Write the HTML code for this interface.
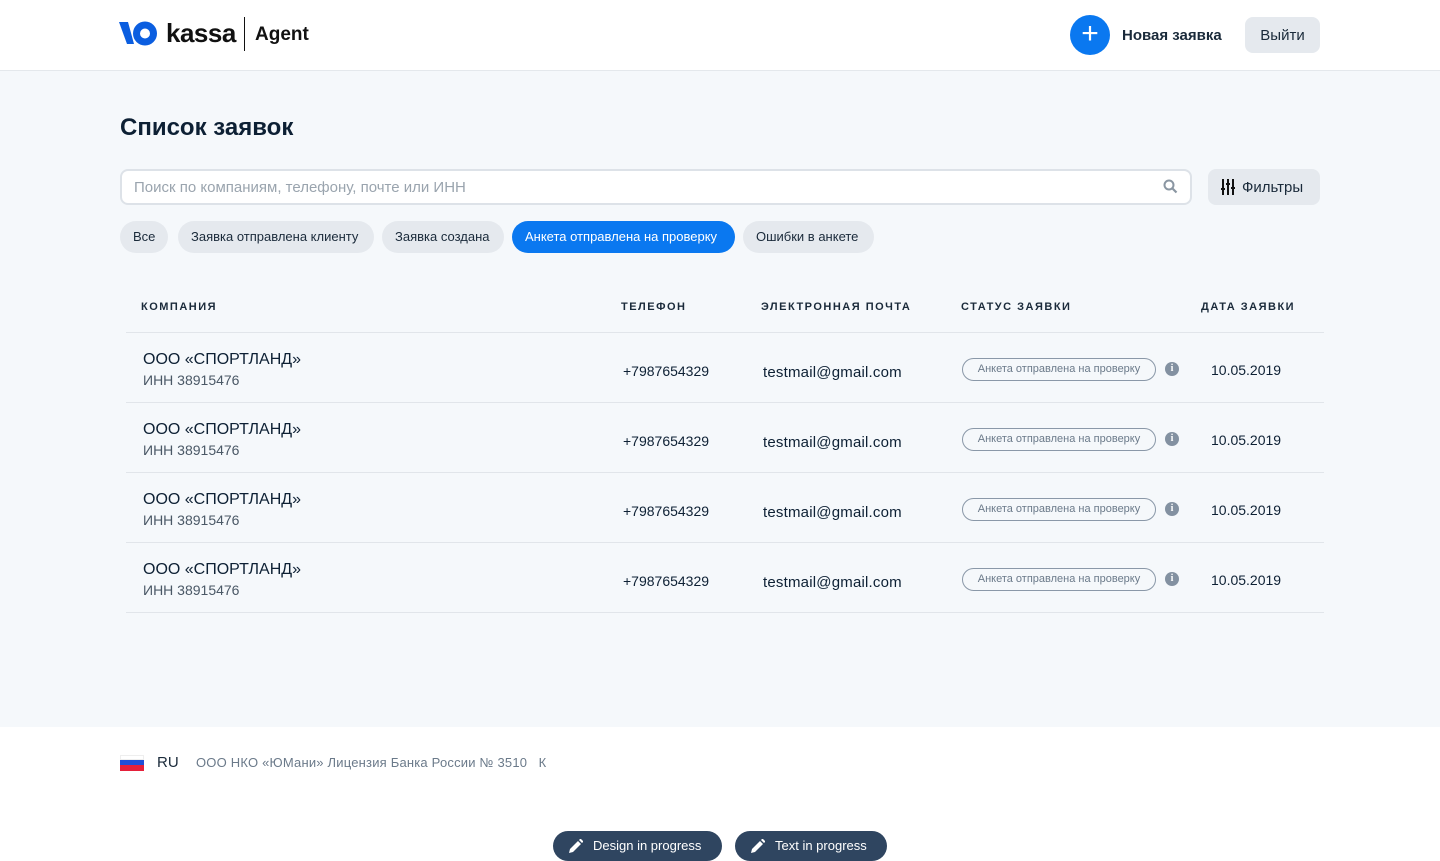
<!DOCTYPE html>
<html><head><meta charset="utf-8"><style>
*{box-sizing:border-box;margin:0;padding:0}
body{width:1440px;height:860px;overflow:hidden;background:#fff;font-family:"Liberation Sans",sans-serif;color:#0d2034;position:relative}
.abs{position:absolute}
header{position:absolute;left:0;top:0;width:1440px;height:71px;background:#fff;border-bottom:1px solid #e4e8ec}
main{position:absolute;left:0;top:71px;width:1440px;height:656px;background:#f5f8fb}
.chip{position:absolute;top:221px;height:32px;border-radius:16px;background:#e5e9ee;font-size:13px;line-height:32px;padding:0 13px;color:#1a2a3a;white-space:nowrap}
.th{position:absolute;top:301px;font-size:11px;font-weight:bold;letter-spacing:1.5px;color:#1a2a3a}
.line{position:absolute;left:126px;width:1198px;height:1px;background:#e1e5ea}
.cell{position:absolute;white-space:nowrap}
.badge{position:absolute;left:962px;height:23px;width:194px;border:1px solid #8a98a8;border-radius:12px;font-size:11px;line-height:21px;text-align:center;color:#6b7a8a}
.info{position:absolute;left:1165px;width:14px;height:14px;border-radius:50%;background:#8391a1;color:#fff;font-size:10px;font-weight:bold;line-height:14px;text-align:center;font-family:"Liberation Serif",serif}
.pill{position:absolute;top:831px;height:30px;border-radius:15px;background:#2f4560;color:#fff;font-size:13px;line-height:30px;padding-left:40px}
</style></head><body>
<header>
<svg class="abs" style="left:119px;top:20px" width="40" height="27" viewBox="0 0 40 27"><path d="M0 2h9l6 22H8z" fill="#0b5ee0"/><circle cx="26" cy="13.5" r="12" fill="#0b5ee0"/><circle cx="26" cy="13.5" r="5" fill="#fff"/></svg>
<div class="abs" style="left:166px;top:18px;font-size:26px;font-weight:bold;color:#111;letter-spacing:-0.5px">kassa</div>
<div class="abs" style="left:244px;top:17px;width:1px;height:34px;background:#111"></div>
<div class="abs" style="left:255px;top:24px;font-size:19px;font-weight:bold;color:#111">Agent</div>
<div class="abs" style="left:1070px;top:15px;width:40px;height:40px;border-radius:50%;background:#0a78f0;color:#fff;font-size:30px;line-height:38px;text-align:center">+</div>
<div class="abs" style="left:1122px;top:27px;font-size:15px;font-weight:bold;color:#1a2a3a">Новая заявка</div>
<div class="abs" style="left:1245px;top:17px;width:75px;height:36px;border-radius:8px;background:#e5e9ee;font-size:15px;line-height:37px;text-align:center;color:#1a2a3a">Выйти</div>
</header>
<main></main>
<div class="abs" style="left:120px;top:114px;font-size:24px;font-weight:bold;color:#0d2034">Список заявок</div>
<div class="abs" style="left:120px;top:169px;width:1072px;height:36px;border:2px solid #dde2e8;border-radius:8px;background:#fff;font-size:15px;line-height:33px;padding-left:12px;color:#9aa4ae">Поиск по компаниям, телефону, почте или ИНН</div>
<svg class="abs" style="left:1163px;top:179px" width="15" height="15" viewBox="0 0 15 15"><circle cx="6" cy="6" r="4.5" stroke="#8a96a2" stroke-width="2" fill="none"/><path d="M9.5 9.5L13.5 13.5" stroke="#8a96a2" stroke-width="2.2"/></svg>
<div class="abs" style="left:1208px;top:169px;width:112px;height:36px;border-radius:8px;background:#e5e9ee;font-size:15px;line-height:37px;padding-left:34px;color:#1a2a3a">Фильтры</div>
<svg class="abs" style="left:1221px;top:179px" width="14" height="16" viewBox="0 0 14 16"><g stroke="#111" stroke-width="2"><path d="M2 0v16M7 0v16M12 0v16"/></g><g fill="#111"><rect x="0" y="9" width="4" height="2"/><rect x="5" y="4" width="4" height="2"/><rect x="10" y="8" width="4" height="2"/></g></svg>
<div class="chip" style="left:120px">Все</div>
<div class="chip" style="left:178px;width:196px">Заявка отправлена клиенту</div>
<div class="chip" style="left:382px;width:122px">Заявка создана</div>
<div class="chip" style="left:512px;width:223px;background:#0a78f0;color:#fff">Анкета отправлена на проверку</div>
<div class="chip" style="left:743px;width:131px">Ошибки в анкете</div>
<div class="th" style="left:141px">КОМПАНИЯ</div>
<div class="th" style="left:621px">ТЕЛЕФОН</div>
<div class="th" style="left:761px">ЭЛЕКТРОННАЯ ПОЧТА</div>
<div class="th" style="left:961px">СТАТУС ЗАЯВКИ</div>
<div class="th" style="left:1201px">ДАТА ЗАЯВКИ</div>
<div class="line" style="top:332px"></div>
<div class="line" style="top:402px"></div>
<div class="line" style="top:472px"></div>
<div class="line" style="top:542px"></div>
<div class="line" style="top:612px"></div>

<div class="cell" style="left:143px;top:351px;font-size:16px">ООО «СПОРТЛАНД»</div>
<div class="cell" style="left:143px;top:372px;font-size:14px;color:#4a5866">ИНН 38915476</div>
<div class="cell" style="left:623px;top:363px;font-size:14px">+7987654329</div>
<div class="cell" style="left:763px;top:364px;font-size:15px;letter-spacing:0.2px">testmail@gmail.com</div>
<div class="badge" style="top:358px">Анкета отправлена на проверку</div>
<div class="info" style="top:362px">i</div>
<div class="cell" style="left:1211px;top:362px;font-size:14px">10.05.2019</div>

<div class="cell" style="left:143px;top:421px;font-size:16px">ООО «СПОРТЛАНД»</div>
<div class="cell" style="left:143px;top:442px;font-size:14px;color:#4a5866">ИНН 38915476</div>
<div class="cell" style="left:623px;top:433px;font-size:14px">+7987654329</div>
<div class="cell" style="left:763px;top:434px;font-size:15px;letter-spacing:0.2px">testmail@gmail.com</div>
<div class="badge" style="top:428px">Анкета отправлена на проверку</div>
<div class="info" style="top:432px">i</div>
<div class="cell" style="left:1211px;top:432px;font-size:14px">10.05.2019</div>

<div class="cell" style="left:143px;top:491px;font-size:16px">ООО «СПОРТЛАНД»</div>
<div class="cell" style="left:143px;top:512px;font-size:14px;color:#4a5866">ИНН 38915476</div>
<div class="cell" style="left:623px;top:503px;font-size:14px">+7987654329</div>
<div class="cell" style="left:763px;top:504px;font-size:15px;letter-spacing:0.2px">testmail@gmail.com</div>
<div class="badge" style="top:498px">Анкета отправлена на проверку</div>
<div class="info" style="top:502px">i</div>
<div class="cell" style="left:1211px;top:502px;font-size:14px">10.05.2019</div>

<div class="cell" style="left:143px;top:561px;font-size:16px">ООО «СПОРТЛАНД»</div>
<div class="cell" style="left:143px;top:582px;font-size:14px;color:#4a5866">ИНН 38915476</div>
<div class="cell" style="left:623px;top:573px;font-size:14px">+7987654329</div>
<div class="cell" style="left:763px;top:574px;font-size:15px;letter-spacing:0.2px">testmail@gmail.com</div>
<div class="badge" style="top:568px">Анкета отправлена на проверку</div>
<div class="info" style="top:572px">i</div>
<div class="cell" style="left:1211px;top:572px;font-size:14px">10.05.2019</div>

<div class="abs" style="left:120px;top:755px;width:24px;height:16px"><div style="height:5px;background:#fff;border:1px solid #eee"></div><div style="height:5px;background:#1f4fd8"></div><div style="height:6px;background:#e5203a"></div></div>
<div class="cell" style="left:157px;top:754px;font-size:15px;color:#1a2a3a">RU</div>
<div class="cell" style="left:196px;top:755px;font-size:13px;color:#6b7a8a;letter-spacing:0.2px">ООО НКО «ЮМани» Лицензия Банка России № 3510&nbsp;&nbsp;&nbsp;К</div>
<div class="pill" style="left:553px;width:169px">Design in progress</div>
<div class="pill" style="left:735px;width:152px">Text in progress</div>
<svg class="abs" style="left:569px;top:839px" width="14" height="14" viewBox="0 0 14 14"><path d="M0 14l1-4 8-8 3 3-8 8z M10 1l1.5-1.5 3 3L13 4z" fill="#fff"/></svg>
<svg class="abs" style="left:751px;top:839px" width="14" height="14" viewBox="0 0 14 14"><path d="M0 14l1-4 8-8 3 3-8 8z M10 1l1.5-1.5 3 3L13 4z" fill="#fff"/></svg>
</body></html>
